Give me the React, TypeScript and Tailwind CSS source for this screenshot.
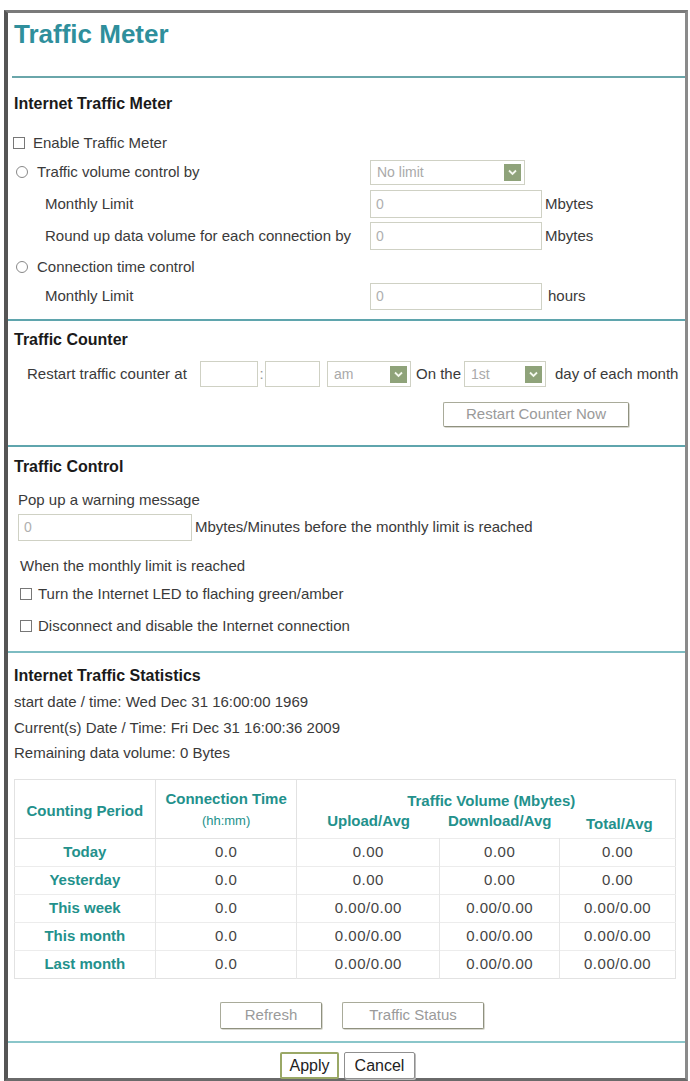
import React from 'react'

const font = { fontFamily: '"Liberation Sans", Arial, sans-serif' }

function Arrow() {
  return (
    <span className="flex h-[17px] w-[17px] items-center justify-center bg-[#8fa37a]">
      <svg width="9" height="7" viewBox="0 0 9 7">
        <path d="M1 1.5 L4.5 5 L8 1.5" stroke="#f4f8ee" strokeWidth="1.8" fill="none" />
      </svg>
    </span>
  )
}

function Select({ value, className }: { value: string; className: string }) {
  return (
    <div className={`flex items-center justify-between border border-[#cfd1c4] bg-white pl-[6px] pr-[3px] text-[14px] text-[#a9a9a9] ${className}`}>
      <span>{value}</span>
      <Arrow />
    </div>
  )
}

function Field({ value = '', className }: { value?: string; className: string }) {
  return (
    <div className={`flex items-center border border-[#cfd1c4] bg-white pl-[5px] text-[14px] text-[#b0b0b0] ${className}`}>
      {value}
    </div>
  )
}

function Box() {
  return <span className="inline-block h-[12px] w-[12px] border border-[#777] bg-white" />
}

function Radio() {
  return <span className="inline-block h-[12px] w-[12px] rounded-full border border-[#888] bg-white" />
}

function Btn({ label, className }: { label: string; className: string }) {
  return (
    <div className={`flex items-center justify-center rounded-[2px] border border-[#a9ab9a] border-b-[#8f917f] border-r-[#8f917f] bg-white text-[15px] text-[#9a9a9a] shadow-[1px_1px_0_#d8d8d0] ${className}`}>
      {label}
    </div>
  )
}

function Line({ className = '' }: { className?: string }) {
  return <div className={`h-[2px] bg-[#5fa5ad] ${className}`} />
}

const rows = [
  ['Today', '0.0', '0.00', '0.00', '0.00'],
  ['Yesterday', '0.0', '0.00', '0.00', '0.00'],
  ['This week', '0.0', '0.00/0.00', '0.00/0.00', '0.00/0.00'],
  ['This month', '0.0', '0.00/0.00', '0.00/0.00', '0.00/0.00'],
  ['Last month', '0.0', '0.00/0.00', '0.00/0.00', '0.00/0.00'],
]

export default function App() {
  return (
    <div className="h-[1081px] w-[690px] overflow-hidden bg-white pl-[4px] pt-[10px]" style={font}>
      <div className="h-[1071px] w-[684px] border-b-[3px] border-l-4 border-r-[3px] border-t-[3px] border-b-[#6a6a6a] border-l-[#555] border-r-[#8a8a8a] border-t-[#7a7a7a] text-[15px] text-[#3a3a3a]">
        {/* title */}
        <div className="flex h-[42px] items-center pl-[6px] text-[26px] font-bold text-[#2f8f9c]">Traffic Meter</div>
        <div className="h-[21px]" />
        <Line className="ml-[4px] bg-[#6aa6aa]" />

        {/* internet traffic meter */}
        <div className="flex h-[52px] items-center pl-[6px] text-[16px] font-bold text-[#1a1a1a]">Internet Traffic Meter</div>
        <div className="flex h-[26px] items-center pl-[5px]">
          <Box />
          <span className="ml-[8px]">Enable Traffic Meter</span>
        </div>
        <div className="flex h-[32px] items-center pl-[8px]">
          <Radio />
          <span className="ml-[9px] w-[333px]">Traffic volume control by</span>
          <Select value="No limit" className="h-[25px] w-[155px]" />
        </div>
        <div className="flex h-[32px] items-center pl-[37px]">
          <span className="w-[325px]">Monthly Limit</span>
          <Field value="0" className="h-[28px] w-[172px]" />
          <span className="ml-[3px]">Mbytes</span>
        </div>
        <div className="flex h-[32px] items-center pl-[37px]">
          <span className="w-[325px]">Round up data volume for each connection by</span>
          <Field value="0" className="h-[28px] w-[172px]" />
          <span className="ml-[3px]">Mbytes</span>
        </div>
        <div className="flex h-[30px] items-center pl-[8px]">
          <Radio />
          <span className="ml-[9px]">Connection time control</span>
        </div>
        <div className="flex h-[28px] items-center pl-[37px]">
          <span className="w-[325px]">Monthly Limit</span>
          <Field value="0" className="h-[27px] w-[172px]" />
          <span className="ml-[6px]">hours</span>
        </div>
        <div className="h-[9px]" />
        <Line />

        {/* traffic counter */}
        <div className="flex h-[38px] items-center pl-[6px] text-[16px] font-bold text-[#1a1a1a]">Traffic Counter</div>
        <div className="flex h-[30px] items-center pl-[19px]">
          <span className="w-[173px]">Restart traffic counter at</span>
          <Field className="h-[26px] w-[58px]" />
          <span className="w-[7px] text-center text-[#999]">:</span>
          <Field className="h-[26px] w-[55px]" />
          <Select value="am" className="ml-[7px] h-[26px] w-[84px]" />
          <span className="ml-[5px] w-[48px]">On the</span>
          <Select value="1st" className="h-[26px] w-[82px]" />
          <span className="ml-[9px]">day of each month</span>
        </div>
        <div className="flex pl-[435px] pt-[13px]">
          <Btn label="Restart Counter Now" className="h-[25px] w-[186px]" />
        </div>
        <div className="h-[18px]" />
        <Line />

        {/* traffic control */}
        <div className="flex h-[40px] items-center pl-[6px] text-[16px] font-bold text-[#1a1a1a]">Traffic Control</div>
        <div className="flex h-[26px] items-center pl-[10px]">Pop up a warning message</div>
        <div className="flex h-[29px] items-center pl-[10px]">
          <Field value="0" className="h-[27px] w-[174px]" />
          <span className="ml-[3px]">Mbytes/Minutes before the monthly limit is reached</span>
        </div>
        <div className="mt-[9px] flex h-[30px] items-center pl-[12px]">When the monthly limit is reached</div>
        <div className="flex h-[26px] items-center pl-[12px]">
          <Box />
          <span className="ml-[6px]">Turn the Internet LED to flaching green/amber</span>
        </div>
        <div className="mt-[4px] flex h-[30px] items-center pl-[12px]">
          <Box />
          <span className="ml-[6px]">Disconnect and disable the Internet connection</span>
        </div>
        <div className="h-[10px]" />
        <Line className="bg-[#7dbcc2]" />

        {/* statistics */}
        <div className="mt-[10px] flex h-[26px] items-center pl-[6px] text-[16px] font-bold text-[#1a1a1a]">Internet Traffic Statistics</div>
        <div className="flex h-[26px] items-center pl-[6px]">start date / time: Wed Dec 31 16:00:00 1969</div>
        <div className="flex h-[26px] items-center pl-[6px]">Current(s) Date / Time: Fri Dec 31 16:00:36 2009</div>
        <div className="flex h-[25px] items-center pl-[6px]">Remaining data volume: 0 Bytes</div>

        <div className="ml-[6px] mt-[13px] w-[662px]">
          <table className="w-full border-collapse border border-[#e2e2e2] text-center">
            <colgroup>
              <col className="w-[141px]" />
              <col className="w-[142px]" />
              <col className="w-[143px]" />
              <col className="w-[120px]" />
              <col className="w-[116px]" />
            </colgroup>
            <thead className="font-bold text-[#23918c]">
              <tr className="h-[31px]">
                <th rowSpan={2} className="border border-[#e2e2e2] pt-[4px] text-[15px]">Counting Period</th>
                <th rowSpan={2} className="border border-[#e2e2e2] text-[15px] leading-[21px]">
                  Connection Time
                  <br />
                  <span className="text-[13px] font-normal">(hh:mm)</span>
                </th>
                <th colSpan={3} className="pl-[10px] pt-[10px] text-[15px] leading-[15px]">Traffic Volume (Mbytes)</th>
              </tr>
              <tr className="h-[28px] text-[15px] leading-[18px]">
                <th className="pt-[1px] align-top">Upload/Avg</th>
                <th className="pt-[1px] align-top">Download/Avg</th>
                <th className="pl-[4px] pt-[4px] align-top">Total/Avg</th>
              </tr>
            </thead>
            <tbody className="text-[15px] tracking-[0.5px] text-[#444]">
              {rows.map((r) => (
                <tr key={r[0]} className="h-[28px] border-t border-[#ececec]">
                  <td className="border-r border-[#e6e6e6] font-bold tracking-normal text-[#23918c]">{r[0]}</td>
                  <td className="border-r border-[#e6e6e6]">{r[1]}</td>
                  <td className="border-r border-[#e6e6e6]">{r[2]}</td>
                  <td className="border-r border-[#e6e6e6]">{r[3]}</td>
                  <td>{r[4]}</td>
                </tr>
              ))}
            </tbody>
          </table>
        </div>

        <div className="flex gap-[20px] pl-[212px] pt-[23px]">
          <Btn label="Refresh" className="h-[27px] w-[102px]" />
          <Btn label="Traffic Status" className="h-[27px] w-[142px]" />
        </div>
        <div className="h-[12px]" />
        <Line className="bg-[#8ac6ca]" />
        <div className="flex gap-[5px] pl-[272px] pt-[9px]">
          <div className="flex h-[27px] w-[59px] items-center justify-center rounded-[2px] border-2 border-[#9aa866] bg-white text-[16px] text-[#222]">Apply</div>
          <div className="flex h-[27px] w-[71px] items-center justify-center rounded-[2px] border border-[#8f8f8f] bg-white text-[16px] text-[#222] shadow-[1px_1px_0_#bbb]">Cancel</div>
        </div>
      </div>
    </div>
  )
}
